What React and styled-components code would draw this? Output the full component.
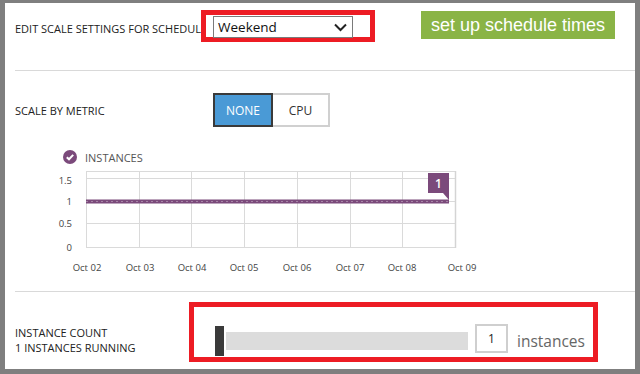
import styled, { createGlobalStyle } from "styled-components";

const GlobalStyle = createGlobalStyle`
  html, body {
    margin: 0;
    padding: 0;
    background: #7f7f7f;
  }
  body {
    font-family: "Open Sans", "Noto Sans", sans-serif;
    color: #333;
  }
`;

const PURPLE = "#7b4a7b";

const Panel = styled.div`
  margin: 3px 5px 5px 5px;
  width: 630px;
  height: 366px;
  background: #fff;
  box-sizing: border-box;
  overflow: hidden;
`;

const Section = styled.section`
  margin-left: 10px;
  display: flex;
  flex-direction: ${({ $column }) => ($column ? "column" : "row")};
  align-items: flex-start;
  height: ${({ $h }) => $h}px;
  padding-top: ${({ $pt }) => $pt || 0}px;
  box-sizing: border-box;
  border-bottom: ${({ $line }) => ($line ? "1px solid #d9d9d9" : "none")};
`;

const Label = styled.div`
  width: ${({ $w }) => $w}px;
  flex-shrink: 0;
  margin-top: ${({ $mt }) => $mt || 0}px;
  font-size: 11px;
  line-height: 15px;
  color: #222;
  text-transform: uppercase;
  white-space: nowrap;
  overflow: hidden;
`;

const RedBox = styled.div`
  border: 5px solid #ed1c24;
  box-sizing: border-box;
  width: ${({ $w }) => $w}px;
  height: ${({ $h }) => $h}px;
  display: flex;
  align-items: ${({ $align }) => $align || "flex-start"};
  padding: ${({ $pad }) => $pad};
`;

const Select = styled.div`
  width: 140px;
  height: 22px;
  box-sizing: border-box;
  border: 1px solid #7a7a7a;
  display: flex;
  align-items: center;
  justify-content: space-between;
  padding: 0 5px 0 4px;
  font-size: 13.5px;
  color: #111;
  background: #fff;
`;

const GreenButton = styled.button`
  margin-left: auto;
  margin-right: 20px;
  margin-top: 1px;
  width: 194px;
  height: 28px;
  border: none;
  background: #8ab446;
  color: #fff;
  font-family: "Liberation Sans", Arial, sans-serif;
  font-size: 18px;
  padding: 0;
  line-height: 26px;
`;

const MetricRow = styled.div`
  display: flex;
  align-items: center;
  height: 34px;
`;

const Toggle = styled.div`
  display: flex;
`;

const ToggleBtn = styled.div`
  width: ${({ $w }) => $w}px;
  height: 34px;
  box-sizing: border-box;
  display: flex;
  align-items: center;
  justify-content: center;
  font-size: 12px;
  background: ${({ $on }) => ($on ? "#4a9ad6" : "#fff")};
  color: ${({ $on }) => ($on ? "#fff" : "#333")};
  border: 2px solid ${({ $on }) => ($on ? "#3a3a3a" : "#d0d0d0")};
  border-left-width: ${({ $on }) => ($on ? 2 : 0)}px;
`;

const Legend = styled.div`
  display: flex;
  align-items: center;
  gap: 8px;
  margin: 23px 0 0 48px;
  height: 14px;
  font-size: 11px;
  color: #555;
`;

const ChartWrap = styled.div`
  margin: 1px 0 0 25px;
`;

const CountBox = styled.div`
  display: flex;
  align-items: center;
  height: 30px;
`;

const Handle = styled.div`
  width: 9px;
  height: 30px;
  background: #3a3a3a;
`;

const Track = styled.div`
  width: 242px;
  height: 18px;
  margin-left: 2px;
  background: #dcdcdc;
`;

const CountInput = styled.div`
  width: 33px;
  height: 29px;
  box-sizing: border-box;
  margin: 0 0 6px 7px;
  border: 2px solid #cfcfcf;
  display: flex;
  align-items: center;
  justify-content: center;
  font-size: 12px;
  color: #222;
`;

const Unit = styled.span`
  margin-left: 9px;
  font-size: 15.5px;
  color: #666;
`;

function CheckCircle() {
  return (
    <svg width="14" height="14" viewBox="0 0 14 14">
      <circle cx="7" cy="7" r="7" fill={PURPLE} />
      <path d="M3.8 7.2 L6 9.3 L10.2 4.9" fill="none" stroke="#fff" strokeWidth="2" />
    </svg>
  );
}

function Chevron() {
  return (
    <svg width="13" height="9" viewBox="0 0 13 9">
      <path d="M1 1.5 L6.5 7 L12 1.5" fill="none" stroke="#222" strokeWidth="2" />
    </svg>
  );
}

const xs = [0, 1, 2, 3, 4, 5, 6, 7].map((i) => 46 + i * 52.71);
const xLabels = ["Oct 02", "Oct 03", "Oct 04", "Oct 05", "Oct 06", "Oct 07", "Oct 08", "Oct 09"];
const labelX = [47, 100, 152, 204, 257, 310, 362, 422];
const yTicks = [
  { v: "1.5", y: 13 },
  { v: "1", y: 36 },
  { v: "0.5", y: 58 },
  { v: "0", y: 82 },
];

function Chart() {
  return (
    <svg width="450" height="112" viewBox="0 0 450 112" style={{ display: "block" }}>
      <g fontFamily="Open Sans, sans-serif" fontSize="9.5" fill="#444">
        {yTicks.map((t) => (
          <text key={t.v} x="32" y={t.y + (t.v === "1.5" ? 6 : 3.5)} textAnchor="end">
            {t.v}
          </text>
        ))}
        {xLabels.map((l, i) => (
          <text key={l} x={labelX[i]} y="106" textAnchor="middle">
            {l}
          </text>
        ))}
      </g>
      {yTicks.map((t) => (
        <line key={t.v} x1="46" x2="415" y1={t.y + 0.5} y2={t.y + 0.5} stroke="#dadada" />
      ))}
      <line x1="46" x2="415" y1="6.5" y2="6.5" stroke="#dadada" />
      {xs.map((x, i) => (
        <line key={i} x1={Math.round(x) + 0.5} x2={Math.round(x) + 0.5} y1="6" y2="83" stroke={i === 7 ? "#d4d4d4" : "#dadada"} strokeWidth={i === 7 ? 1.5 : 1} />
      ))}
      <line x1="46" x2="409" y1="36.5" y2="36.5" stroke={PURPLE} strokeWidth="4" />
      <line x1="46" x2="409" y1="36.5" y2="36.5" stroke="#a584a5" strokeWidth="1" strokeDasharray="2 3" />
      <rect x="388" y="8" width="21" height="20" fill={PURPLE} />
      <path d="M403 28 L409 28 L409 35 Z" fill={PURPLE} />
      <text x="398.5" y="22.5" textAnchor="middle" fontFamily="Open Sans, sans-serif" fontSize="12" fontWeight="600" fill="#fff">
        1
      </text>
    </svg>
  );
}

export default function App() {
  return (
    <>
      <GlobalStyle />
      <Panel>
        <Section $h={68} $pt={7} $line>
          <Label $w={186} $mt={11}>Edit scale settings for schedule</Label>
          <RedBox $w={174} $h={32} $pad="1px 0 0 7px">
            <Select>
              <span>Weekend</span>
              <Chevron />
            </Select>
          </RedBox>
          <GreenButton>set up schedule times</GreenButton>
        </Section>
        <Section $h={221} $pt={22} $column $line>
          <MetricRow>
            <Label $w={198}>Scale by metric</Label>
            <Toggle>
              <ToggleBtn $on $w={60}>NONE</ToggleBtn>
              <ToggleBtn $w={57}>CPU</ToggleBtn>
            </Toggle>
          </MetricRow>
          <Legend>
            <CheckCircle />
            <span>INSTANCES</span>
          </Legend>
          <ChartWrap>
            <Chart />
          </ChartWrap>
        </Section>
        <Section $h={77} $pt={10}>
          <Label $w={174} $mt={23}>
            Instance count
            <br />1 instances running
          </Label>
          <RedBox $w={409} $h={60} $pad="19px 0 1px 21px">
            <CountBox>
              <Handle />
              <Track />
              <CountInput>1</CountInput>
              <Unit>instances</Unit>
            </CountBox>
          </RedBox>
        </Section>
      </Panel>
    </>
  );
}
